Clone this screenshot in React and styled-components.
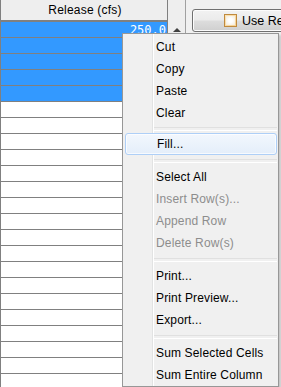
import React from "react";
import styled, { createGlobalStyle } from "styled-components";

const GlobalStyle = createGlobalStyle`
  html, body {
    margin: 0;
    padding: 0;
    background: #f0f0f0;
    overflow: hidden;
  }
  * {
    box-sizing: border-box;
  }
`;

const Screen = styled.div`
  position: relative;
  display: flex;
  width: 281px;
  height: 387px;
  overflow: hidden;
  font-family: "Liberation Sans", Arial, sans-serif;
  font-size: 12px;
  color: #000;
`;

const Table = styled.div`
  width: 168px;
  border-left: 1px solid #808080;
  border-right: 1px solid #808080;
  background: #fff;
  display: flex;
  flex-direction: column;
`;

const Header = styled.div`
  height: 22px;
  flex: none;
  background: #eeeeee;
  border-bottom: 2px solid #808080;
  display: flex;
  align-items: center;
  justify-content: center;
  letter-spacing: 0.2px;
  padding-left: 2px;
`;

const Row = styled.div`
  height: 16px;
  flex: none;
  border-bottom: 1px solid #808080;
  background: ${(p) => (p.$selected ? "#3399ff" : "#fff")};
  color: #fff;
  display: flex;
  align-items: center;
  justify-content: flex-end;
  padding-right: 1px;
  font-family: "DejaVu Sans Mono", "Liberation Mono", monospace;
  font-size: 12px;
`;

const Scroll = styled.div`
  width: 18px;
  border-right: 1px solid #a0a0a0;
  background: #eeeeee;
  display: flex;
  justify-content: center;
  padding-top: 28px;
`;

const UpArrow = styled.div`
  width: 0;
  height: 0;
  border-left: 4px solid transparent;
  border-right: 4px solid transparent;
  border-bottom: 4px solid #404040;
`;

const Panel = styled.div`
  flex: 1;
  padding: 9px 0 0 6px;
  overflow: hidden;
`;

const Button = styled.div`
  width: 140px;
  height: 23px;
  border: 1px solid #707070;
  border-radius: 3px;
  background: linear-gradient(#f2f2f2 0%, #ebebeb 48%, #dddddd 52%, #cfcfcf 100%);
  box-shadow: inset 0 0 0 1px #fcfcfc;
  display: flex;
  align-items: center;
  gap: 5px;
  padding-left: 31px;
  font-size: 12.5px;
  white-space: nowrap;
`;

const CheckIcon = styled.div`
  width: 13px;
  height: 13px;
  flex: none;
  border: 1px solid #c08a3e;
  background: linear-gradient(135deg, #fbe3b6, #f6d294);
  padding: 1px;
  &::after {
    content: "";
    display: block;
    width: 100%;
    height: 100%;
    background: radial-gradient(circle, #fff 30%, #f3ead8 100%);
  }
`;

const Menu = styled.div`
  position: absolute;
  left: 122px;
  top: 33px;
  width: 157px;
  border: 1px solid #979797;
  padding: 2px 0 0 0;
  background: linear-gradient(
      to right,
      transparent 29px,
      #e2e3e3 29px,
      #e2e3e3 30px,
      #ffffff 30px,
      #ffffff 31px,
      transparent 31px
    ),
    #f0f0f0;
  box-shadow: 2px 2px 2px rgba(0, 0, 0, 0.18);
  letter-spacing: 0.15px;
`;

const Item = styled.div`
  height: 22px;
  display: flex;
  align-items: center;
  padding-left: 33px;
  color: ${(p) => (p.$disabled ? "#8d8d8d" : "#000")};
  position: relative;
  ${(p) =>
    p.$hover &&
    `
    margin: 0 1px 0 2px;
    padding-left: 31px;
    border: 1px solid #aecff7;
    border-radius: 3px;
    background: linear-gradient(#f2f7fd, #e4eefa);
    box-shadow: inset 0 0 0 1px rgba(255,255,255,0.7);
  `}
`;

const Separator = styled.div`
  height: ${(p) => p.$h}px;
  display: flex;
  align-items: center;
  padding-left: 31px;
  padding-right: 1px;
  &::after {
    content: "";
    flex: 1;
    height: 2px;
    border-top: 1px solid #e0e0e0;
    border-bottom: 1px solid #ffffff;
  }
`;

const menu = [
  { label: "Cut" },
  { label: "Copy" },
  { label: "Paste" },
  { label: "Clear" },
  { sep: 9 },
  { label: "Fill...", hover: true },
  { sep: 11 },
  { label: "Select All" },
  { label: "Insert Row(s)...", disabled: true },
  { label: "Append Row", disabled: true },
  { label: "Delete Row(s)", disabled: true },
  { sep: 11 },
  { label: "Print..." },
  { label: "Print Preview..." },
  { label: "Export..." },
  { sep: 11 },
  { label: "Sum Selected Cells" },
  { label: "Sum Entire Column" },
];

const rows = Array.from({ length: 23 }, (_, i) => i);

export default function App() {
  return (
    <>
      <GlobalStyle />
      <Screen>
        <Table>
          <Header>Release (cfs)</Header>
          {rows.map((i) => (
            <Row key={i} $selected={i < 5}>
              {i === 0 ? "250.0" : ""}
            </Row>
          ))}
        </Table>
        <Scroll>
          <UpArrow />
        </Scroll>
        <Panel>
          <Button>
            <CheckIcon />
            Use Release
          </Button>
        </Panel>
        <Menu>
          {menu.map((m, i) =>
            m.sep ? (
              <Separator key={i} $h={m.sep} />
            ) : (
              <Item key={i} $disabled={m.disabled} $hover={m.hover}>
                {m.label}
              </Item>
            )
          )}
        </Menu>
      </Screen>
    </>
  );
}
